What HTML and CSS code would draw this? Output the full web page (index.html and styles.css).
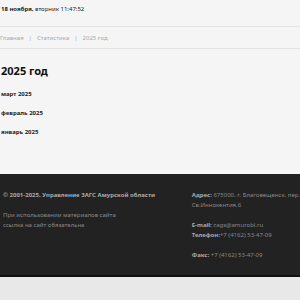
FILE: index.html
```html
<!DOCTYPE html>
<html lang="ru">
<head>
<meta charset="utf-8">
<link rel="stylesheet" href="styles.css">
</head>
<body>
<div class="page">
  <div class="topbar"><span class="date"><b>18 ноября,</b> вторник 11:47:52</span></div>
  <div class="crumbs">
    <a>Главная</a><span class="sep">|</span><a>Статистика</a><span class="sep">|</span><span>2025 год</span>
  </div>
  <main class="content">
    <h1>2025 год</h1>
    <ul class="list">
      <li>март 2025</li>
      <li>февраль 2025</li>
      <li>январь 2025</li>
    </ul>
  </main>
</div>
<footer class="footer">
  <div class="fcol left">
    <p class="copy">© 2001-2025, Управление ЗАГС Амурской области</p>
    <p class="note">При использовании материалов сайта<br>ссылка на сайт обязательна</p>
  </div>
  <div class="fcol right">
    <p><b>Адрес:</b> 675000, г. Благовещенск, пер.<br>Св.Иннокентия,6</p>
    <p><b>E-mail:</b> zags@amurobl.ru<br><b>Телефон:</b>+7 (4162) 53-47-09</p>
    <p><b>Факс:</b> +7 (4162) 53-47-09</p>
  </div>
</footer>
</body>
</html>
```
FILE: styles.css
```css
html, body { margin: 0; padding: 0; }
body {
  background: #e8e8e8;
  font-family: "Noto Sans", "Open Sans", sans-serif;
  color: #222;
}
.page { background: #f5f5f5; }
.topbar {
  height: 27px;
  border-bottom: 1px solid #e2e2e2;
  padding: 4px 0 0 1px;
  box-sizing: border-box;
  font-size: 6px;
  line-height: 10px;
}
.date { color: #222; }
.date b { font-weight: 700; }
.crumbs {
  height: 22px;
  border-bottom: 1px solid #e2e2e2;
  display: flex;
  align-items: center;
  font-size: 6px;
  color: #aaa;
  box-sizing: border-box;
}
.crumbs .sep { margin: 0 5px; }
.content { padding: 14px 0 37px 1px; }
h1 { margin: 0 0 11px; font-size: 11px; font-weight: 700; color: #111; line-height: 16px; }
.list { list-style: none; margin: 0; padding: 0; display: flex; flex-direction: column; gap: 10px; }
.list li { font-size: 6px; font-weight: 700; color: #222; line-height: 9px; }
.footer {
  background: #222;
  border-bottom: 2px solid #111;
  display: flex;
  padding: 16px 0 12px 3px;
  height: 103px;
  box-sizing: border-box;
  font-size: 6px;
  line-height: 10px;
  color: #888;
}
.footer p { margin: 0; }
.left { width: 192px; }
.copy { font-weight: 700; color: #aaa; margin-bottom: 10px !important; }
.right p { margin-bottom: 10px; white-space: nowrap; }
.right b { color: #aaa; }
```
